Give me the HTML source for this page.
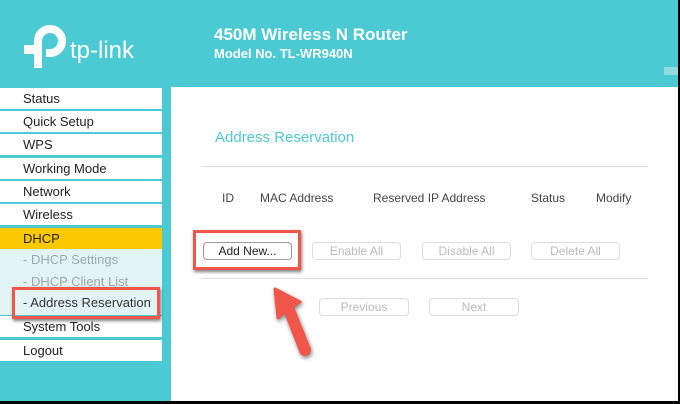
<!DOCTYPE html>
<html><head><meta charset="utf-8"><style>
*{margin:0;padding:0;box-sizing:border-box}
body{width:680px;height:404px;position:relative;overflow:hidden;background:#000;font-family:"Liberation Sans",Arial,sans-serif}
#main{position:absolute;left:0;top:0;width:678px;height:401px;background:#4ccad4;overflow:hidden}
.h1{position:absolute;left:214px;top:25px;color:#fff;font-weight:bold;font-size:17px}
.h2{position:absolute;left:214px;top:46px;color:#fff;font-weight:bold;font-size:13px}
.logo{position:absolute;left:70px;top:37px;color:#fff;font-size:24px;letter-spacing:0}
#content{position:absolute;left:171px;top:87px;width:510px;height:320px;background:#fff}
.nav{position:absolute;left:0;width:162px;height:21px;background:#fff;font-size:13px;color:#222;padding-left:23px;line-height:21px}
.sub{color:#9aa;background:#e2f4f6}
.t{position:absolute;font-size:12px;color:#444}
.btn{position:absolute;height:18px;border:1px solid #ddd;border-radius:4px;font-size:12px;color:#bbb;text-align:center;line-height:16px;background:#fff}
.line{position:absolute;left:201px;width:447px;height:1px;background:#ddd}
.red{position:absolute;border:3px solid #f0564a;box-shadow:1px 2px 3px rgba(0,0,0,.5)}
</style></head><body><div id="main">
<svg style="position:absolute;left:22px;top:24px" width="46" height="48" viewBox="0 0 46 48"><path d="M16 44 V17 A12 12 0 1 1 28 29 H24" fill="none" stroke="#fff" stroke-width="8"/><rect x="2" y="21" width="10" height="9" fill="#fff"/></svg>
<div class="logo">tp-link</div>
<div class="h1">450M Wireless N Router</div>
<div class="h2">Model No. TL-WR940N</div>
<div style="position:absolute;left:664px;top:67px;width:14px;height:8px;background:#8fdde3"></div>
<div id="content"></div>
<div class="nav" style="top:88px">Status</div>
<div class="nav" style="top:111px">Quick Setup</div>
<div class="nav" style="top:134px">WPS</div>
<div class="nav" style="top:158px">Working Mode</div>
<div class="nav" style="top:181px">Network</div>
<div class="nav" style="top:204px">Wireless</div>
<div class="nav" style="top:228px;background:#fcc800;height:21px">DHCP</div>
<div class="nav sub" style="top:249px;height:66px"></div>
<div class="nav" style="top:249px;background:none;color:#9aa;line-height:22px">- DHCP Settings</div>
<div class="nav" style="top:271px;background:none;color:#9aa;line-height:22px">- DHCP Client List</div>
<div class="nav" style="top:292px;background:none;color:#333;line-height:22px">- Address Reservation</div>
<div class="nav" style="top:316px">System Tools</div>
<div class="nav" style="top:340px">Logout</div>
<div class="red" style="left:12px;top:287px;width:148px;height:32px"></div>
<div style="position:absolute;left:215px;top:129px;font-size:15px;color:#4ccad4">Address Reservation</div>
<div class="line" style="top:166px"></div>
<div class="t" style="left:222px;top:191px">ID</div>
<div class="t" style="left:260px;top:191px">MAC Address</div>
<div class="t" style="left:373px;top:191px">Reserved IP Address</div>
<div class="t" style="left:531px;top:191px">Status</div>
<div class="t" style="left:596px;top:191px">Modify</div>
<div class="btn" style="left:203px;top:242px;width:89px;color:#222;border-color:#999">Add New...</div>
<div class="btn" style="left:312px;top:242px;width:89px">Enable All</div>
<div class="btn" style="left:422px;top:242px;width:89px">Disable All</div>
<div class="btn" style="left:531px;top:242px;width:89px">Delete All</div>
<div class="red" style="left:193px;top:230px;width:108px;height:40px"></div>
<div class="line" style="top:278px"></div>
<div class="btn" style="left:319px;top:298px;width:90px">Previous</div>
<div class="btn" style="left:429px;top:298px;width:90px">Next</div>
<svg style="position:absolute;left:260px;top:280px" width="60" height="90"><path d="M15 9 L40 22 L32 26 L49 68 A4 4 0 0 1 41 72 L25 31 L18 38 Z" fill="#f0564a" stroke="#f0564a" stroke-width="3" stroke-linejoin="round" filter="drop-shadow(1px 2px 2px rgba(0,0,0,.5))"/></svg>
</div></body></html>
